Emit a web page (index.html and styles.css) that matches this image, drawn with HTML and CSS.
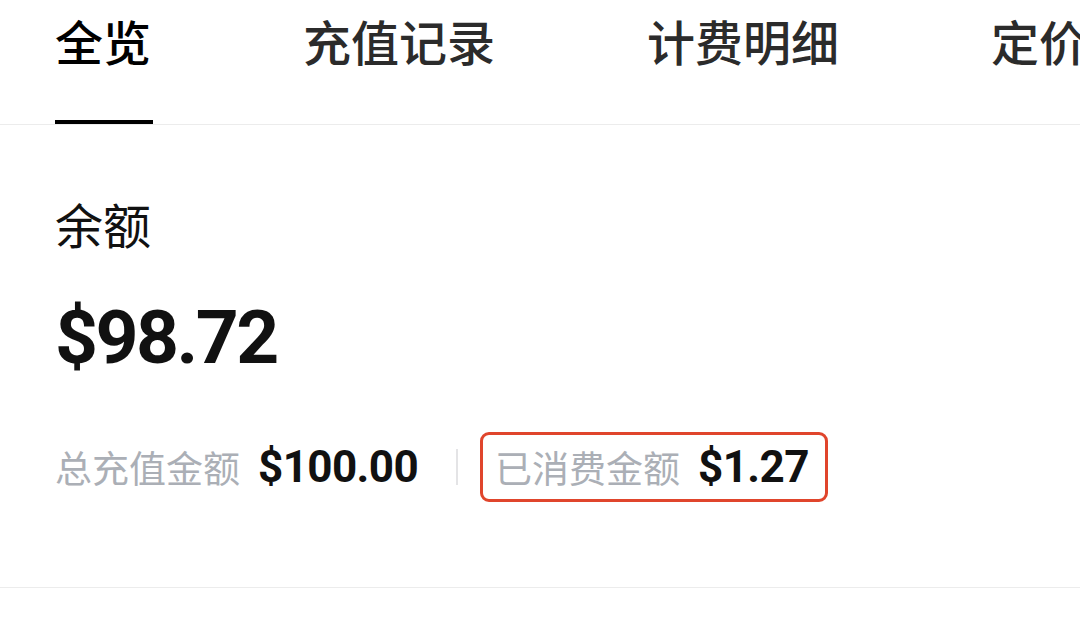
FILE: index.html
```html
<!DOCTYPE html>
<html lang="zh-CN">
<head>
<meta charset="utf-8">
<link rel="stylesheet" href="styles.css">
</head>
<body>
<nav class="tabs">
  <div class="tab active">全览</div>
  <div class="tab">充值记录</div>
  <div class="tab">计费明细</div>
  <div class="tab">定价</div>
</nav>
<section class="summary">
  <div class="title">余额</div>
  <div class="balance">$98.72</div>
  <div class="stats">
    <div class="stat">
      <span class="label">总充值金额</span>
      <span class="value">$100.00</span>
    </div>
    <div class="sep"></div>
    <div class="stat highlight">
      <span class="label">已消费金额</span>
      <span class="value">$1.27</span>
    </div>
  </div>
</section>
</body>
</html>
```
FILE: styles.css
```css
html, body {
  margin: 0;
  padding: 0;
  background: #ffffff;
  overflow: hidden;
}
body {
  width: 1080px;
  height: 622px;
  font-family: "Noto Sans CJK SC", "Noto Sans", sans-serif;
  color: #111;
}
.tabs {
  display: flex;
  gap: 152px;
  padding-left: 55px;
  height: 124px;
  border-bottom: 1px solid #ececec;
  white-space: nowrap;
  overflow: hidden;
}
.tab {
  box-sizing: border-box;
  height: 124px;
  padding-top: 10px;
  font-size: 48px;
  line-height: 60px;
  font-weight: 500;
  color: #2b2b2b;
  flex-shrink: 0;
}
.tab.active {
  color: #000;
  border-bottom: 4px solid #000;
  padding-right: 2px;
}
.tabs .tab.active + .tab {
  margin-left: -2px;
}
.summary {
  box-sizing: border-box;
  padding: 68px 55px 0;
  height: 463px;
  border-bottom: 1px solid #ececec;
}
.title {
  font-size: 48px;
  line-height: 60px;
  color: #111;
}
.balance {
  margin-top: 39px;
  font-family: Roboto, "Liberation Sans", sans-serif;
  font-weight: 700;
  font-size: 75px;
  line-height: 90px;
  color: #111;
  letter-spacing: -2.5px;
}
.stats {
  margin-top: 50px;
  display: flex;
  align-items: center;
}
.stat {
  display: flex;
  align-items: center;
  gap: 18px;
}
.label {
  font-size: 37px;
  line-height: 50px;
  color: #abafb6;
}
.value {
  font-family: Roboto, "Liberation Sans", sans-serif;
  font-weight: 700;
  font-size: 44px;
  line-height: 50px;
  color: #111;
  letter-spacing: -0.6px;
}
.sep {
  width: 2px;
  height: 36px;
  background: #e4e4e6;
  margin: 0 22px 0 38px;
}
.highlight {
  border: 3px solid #e0452c;
  border-radius: 9px;
  padding: 7px 16px 7px 12px;
}
```
